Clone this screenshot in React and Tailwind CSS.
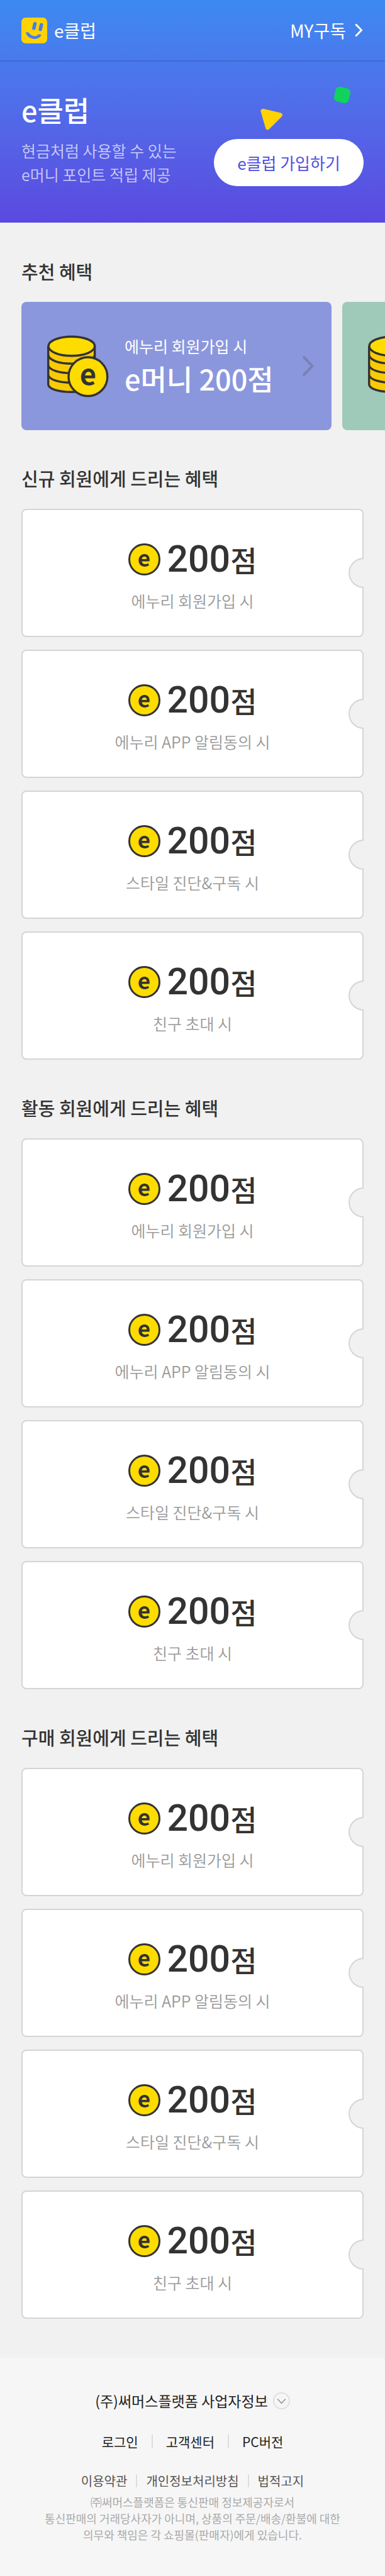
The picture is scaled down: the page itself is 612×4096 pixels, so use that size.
import React from "react";

const benefits = ["에누리 회원가입 시", "에누리 APP 알림동의 시", "스타일 진단&구독 시", "친구 초대 시"];

const groups = [
  "신규 회원에게 드리는 혜택",
  "활동 회원에게 드리는 혜택",
  "구매 회원에게 드리는 혜택",
];

function Logo() {
  return (
    <svg className="size-[41px]" viewBox="0 0 48 48" aria-hidden="true">
      <rect width="48" height="48" rx="8" fill="#ffd200" />
      <g fill="none" stroke="#437ef0" strokeWidth="6.4" strokeLinecap="round">
        <path d="M25.2 11.3L23.3 19.8" />
        <path d="M37.2 13.3L35.3 21.8" />
      </g>
      <path d="M8 27.3L13.500 27.600C16 32 20 34.500 25 34.500C28 34.500 30 33 31.500 31L37.300 32C35 37 30 40 24 39.700C16 39 9.500 35 8 27.300Z" fill="#437ef0" />
    </svg>
  );
}

function Chevron({ className, width }) {
  return (
    <svg className={className} viewBox="0 0 18 32" fill="none" stroke="currentColor" strokeWidth={width} strokeLinecap="round" aria-hidden="true">
      <path d="M2 2L15.500 16L2 30" />
    </svg>
  );
}

function Coin() {
  return (
    <span className="flex size-[51px] shrink-0 items-center justify-center rounded-full border-3 border-[#333] bg-[#ffdc00] pb-2 text-[35px] leading-none font-bold">
      e
    </span>
  );
}

function CoinStack({ lettered }) {
  return (
    <svg className="h-[99px] w-[98px] shrink-0" viewBox="84 106 346 348" aria-hidden="true">
      <path d="M90 165V382C94 408 150 424 221 424C292 424 351 408 351 382V165Z" fill="#f8cb05" />
      <g fill="none" stroke="#333" strokeWidth="12">
        <path d="M90 165V382C94 408 150 424 221 424C292 424 351 408 351 382V165" />
        <path d="M90 218C96 246 150 265 221 265" />
        <path d="M90 275C96 300 150 318 221 318" />
        <path d="M90 330C96 354 150 372 221 372" />
        <path d="M221 265C280 265 345 246 351 218" />
      </g>
      <ellipse cx="221" cy="167" rx="130" ry="54" fill="#ffdc00" stroke="#333" strokeWidth="12" />
      <circle cx="313" cy="338" r="109" fill="#ffdc00" stroke="#333" strokeWidth="12" />
      {lettered && (
        <text x="313" y="384" textAnchor="middle" fontSize="160" fontWeight="700" fill="#333">e</text>
      )}
    </svg>
  );
}

function Ticket({ label }) {
  return (
    <li className="relative flex h-[204px] flex-col items-center gap-[10px] rounded-lg border-2 border-[#d5d5d5] bg-white pt-[42px]">
      <p className="flex items-center gap-[11px] text-[#333]">
        <Coin />
        <span className="flex items-center text-[46px] leading-[72px] font-medium">
          <span className="font-[Roboto,sans-serif] text-[59px]">200</span>점
        </span>
      </p>
      <p className="text-[25px] leading-[40px] font-[350] text-[#999]">{label}</p>
      <span className="absolute top-1/2 -right-[2px] h-[48px] w-6 -translate-y-1/2 rounded-l-full border-2 border-r-0 border-[#d5d5d5] bg-[#f1f1f1]" />
    </li>
  );
}

export default function App() {
  return (
    <div className="overflow-hidden bg-[#f1f1f1] font-['Noto_Sans_CJK_KR',sans-serif] text-[#333]">
      <div className="bg-linear-to-b from-[#3c8af1] to-[#5b48e0] text-white">
        <header className="flex h-[98px] items-center justify-between border-b-2 border-[#4068cf] px-[34px]">
          <a href="#home" className="flex items-center gap-[11px] text-[28px] leading-10">
            <Logo />
            e클럽
          </a>
          <a href="#subscription" className="flex items-center gap-[13px] text-[28px] leading-10">
            MY구독
            <Chevron className="h-5 w-[15px]" width="4.500" />
          </a>
        </header>
        <section className="flex h-[256px] items-end justify-between px-[34px] pb-[58px]">
          <div>
            <h1 className="mb-[13px] text-[45px] leading-[64px] font-medium">e클럽</h1>
            <p className="text-[25px] leading-[38px] font-[350] text-white/70">
              현금처럼 사용할 수 있는<br />e머니 포인트 적립 제공
            </p>
          </div>
          <div className="flex w-[238px] flex-col items-end gap-[14px]">
            <svg className="mr-5 h-[70px] w-[144px]" viewBox="0 0 144 70" aria-hidden="true">
              <path d="M4 39.500L31.300 46L11.500 65.800Z" fill="#ffd200" stroke="#ffd200" strokeWidth="7" strokeLinejoin="round" />
              <rect x="118" y="2" width="24" height="24" rx="6.500" fill="#10d25c" transform="rotate(13 130 14)" />
            </svg>
            <button type="button" className="h-[75px] w-full rounded-full bg-white text-[26px] text-[#4f50e0]">e클럽 가입하기</button>
          </div>
        </section>
      </div>

      <main className="flex flex-col gap-[54px] pt-[55px] pb-[62px]">
        <section>
          <h2 className="mb-[27px] px-[34px] text-[29px] leading-[44px] font-medium">추천 혜택</h2>
          <div className="flex gap-[17px] overflow-hidden pl-[34px]">
            <a href="#join" className="flex h-[204px] w-[493px] shrink-0 items-center rounded-lg bg-[#8b97dd] pr-[28px] pl-[41px] text-white">
              <CoinStack lettered />
              <span className="flex grow flex-col pl-[25px]">
                <span className="text-[25px] leading-[40px]">에누리 회원가입 시</span>
                <span className="text-[45px] leading-[64px] font-medium">e머니 200점</span>
              </span>
              <Chevron className="h-[32px] w-[18px] shrink-0 text-[#7782b8]" width="4" />
            </a>
            <a href="#next" aria-label="다음 혜택" className="flex h-[204px] w-[493px] shrink-0 items-center rounded-lg bg-[#9fc9b8] pl-[41px]">
              <CoinStack />
            </a>
          </div>
        </section>
        {groups.map((title) => (
          <section key={title} className="px-[34px]">
            <h2 className="mb-[27px] text-[29px] leading-[44px] font-medium">{title}</h2>
            <ul className="flex flex-col gap-5">
              {benefits.map((label) => (
                <Ticket key={label} label={label} />
              ))}
            </ul>
          </section>
        ))}
      </main>

      <footer className="flex flex-col items-center bg-[#f6f6f6] pt-[48px] pb-[53px] text-center">
        <button type="button" className="flex items-center gap-2 text-[23px] leading-10 text-[#222]">
          (주)써머스플랫폼 사업자정보
          <svg className="size-[27px]" viewBox="0 0 32 32" fill="none" strokeWidth="2" aria-hidden="true">
            <circle cx="16" cy="16" r="15" stroke="#ddd" />
            <path d="M8.500 12.500L16 20.500L23.500 12.500" stroke="#999" />
          </svg>
        </button>
        <nav className="mt-[25px] flex items-center gap-[21px] text-[21px] leading-10 text-[#222]">
          <a href="#login">로그인</a>
          <span className="h-[22px] w-[2px] bg-[#ddd]" />
          <a href="#support">고객센터</a>
          <span className="h-[22px] w-[2px] bg-[#ddd]" />
          <a href="#pc">PC버전</a>
        </nav>
        <nav className="mt-[23px] flex items-center gap-[14px] text-[20px] leading-10 text-[#555]">
          <a href="#terms">이용약관</a>
          <span className="h-5 w-[2px] bg-[#ddd]" />
          <a href="#privacy">개인정보처리방침</a>
          <span className="h-5 w-[2px] bg-[#ddd]" />
          <a href="#legal">법적고지</a>
        </nav>
        <p className="text-[18px] leading-[26px] text-[#aaa]">
          ㈜써머스플랫폼은 통신판매 정보제공자로서<br />
          통신판매의 거래당사자가 아니며, 상품의 주문/배송/환불에 대한<br />
          의무와 책임은 각 쇼핑몰(판매자)에게 있습니다.
        </p>
      </footer>
    </div>
  );
}
